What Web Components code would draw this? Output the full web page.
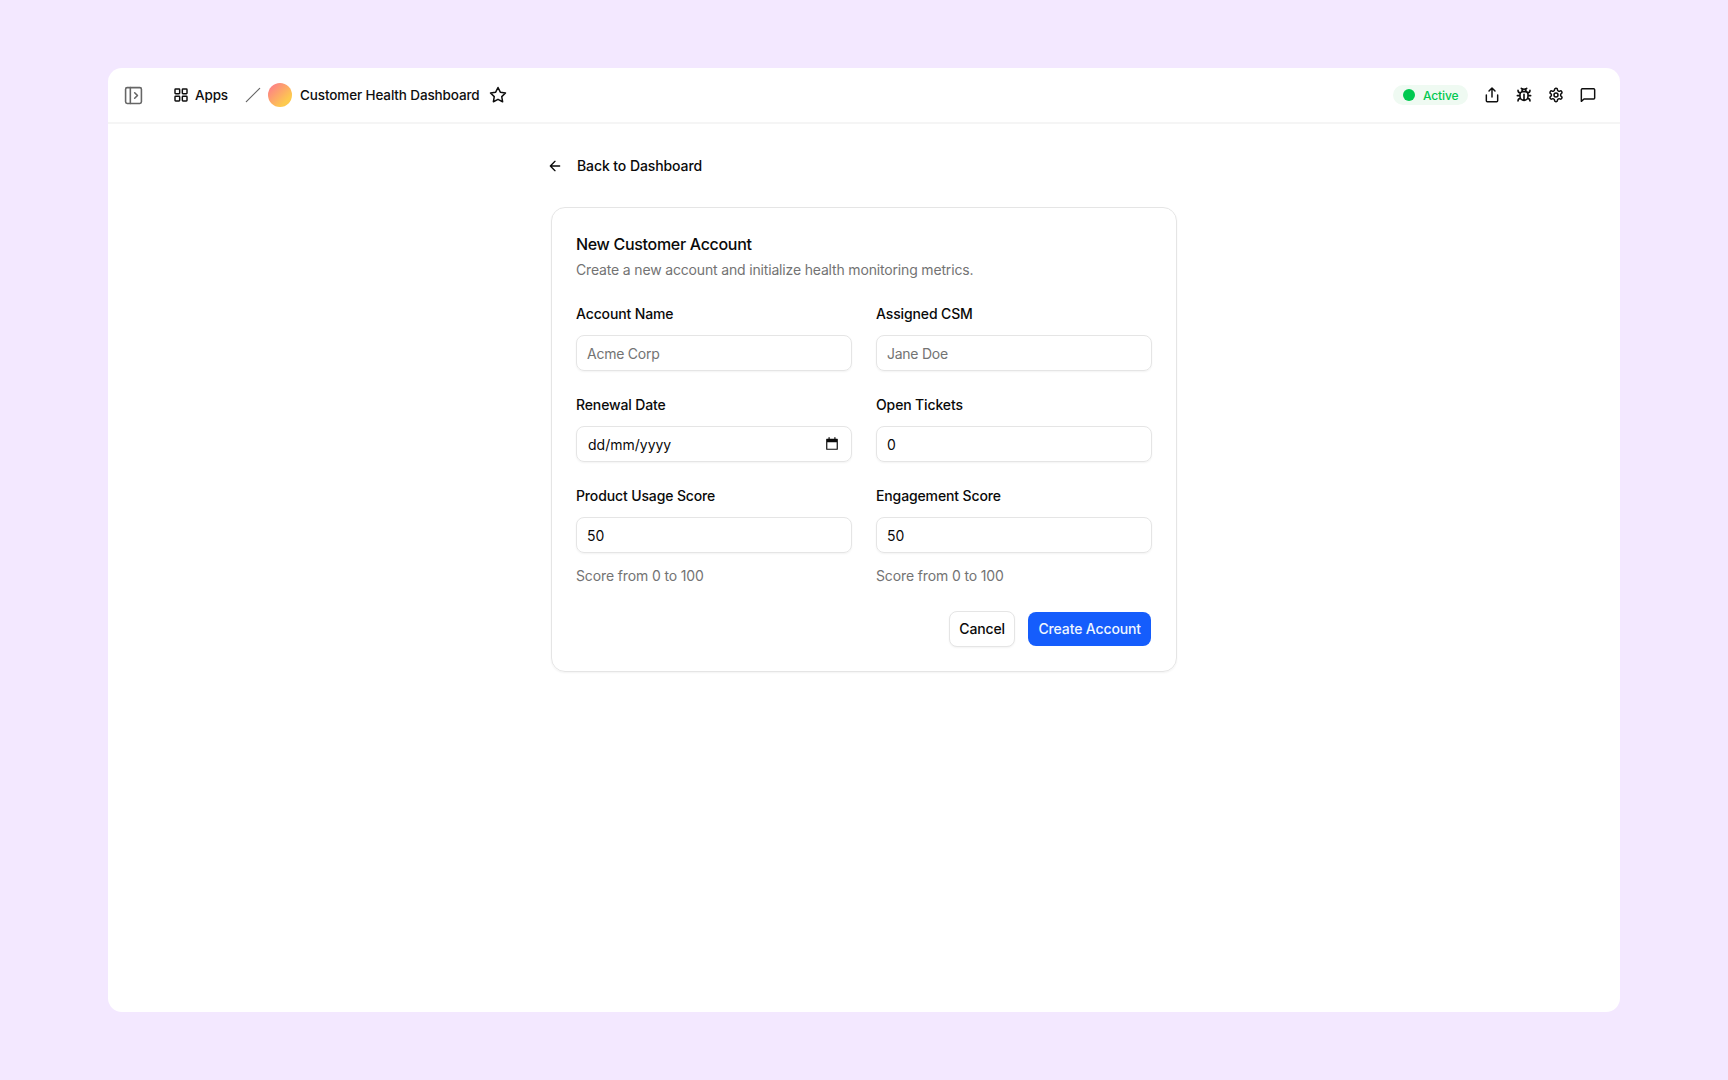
<!DOCTYPE html>
<html lang="en">
<head>
<meta charset="utf-8">
<title>Customer Health Dashboard</title>
<style>
    html, body {
        margin: 0;
        height: 100%;
    }

    body {
        background-color: #f3e8ff;
        font-family: Inter, "Liberation Sans", sans-serif;
        font-size: 14px;
        color: #0a0a0a;
        -webkit-font-smoothing: antialiased;
    }
</style>
</head>
<body>
<app-window>
    <app-header slot="header" app-name="Customer Health Dashboard" status="Active"></app-header>
    <back-link>Back to Dashboard</back-link>
    <form-card>
        <span slot="title">New Customer Account</span>
        <span slot="description">Create a new account and initialize health monitoring metrics.</span>
        <form-field placeholder="Acme Corp">Account Name</form-field>
        <form-field placeholder="Jane Doe">Assigned CSM</form-field>
        <form-field type="date" value="dd/mm/yyyy">Renewal Date</form-field>
        <form-field value="0">Open Tickets</form-field>
        <form-field value="50" hint="Score from 0 to 100">Product Usage Score</form-field>
        <form-field value="50" hint="Score from 0 to 100">Engagement Score</form-field>
        <form-button slot="actions">Cancel</form-button>
        <form-button slot="actions" primary>Create Account</form-button>
    </form-card>
</app-window>

<script>
// all icons live on a 24x24 grid
const icons = {
    sidebar: `<rect x="2" y="2" width="20" height="20" rx="2"/><path d="M8 2v20M13.500 8.500l3.500 3.500-3.500 3.500"/>`,
    grid: `<rect x="3" y="3" width="7" height="7" rx="1"/><rect x="14" y="3" width="7" height="7" rx="1"/><rect x="14" y="14" width="7" height="7" rx="1"/><rect x="3" y="14" width="7" height="7" rx="1"/>`,
    slash: `<path d="M22 2 2 22"/>`,
    star: `<path d="m12 2 3.090 6.260L22 9.270l-5 4.870 1.180 6.880L12 17.770l-6.180 3.250L7 14.140 2 9.270l6.910-1.010z"/>`,
    share: `<path d="M3.500 12v8.500a1.500 1.500 0 0 0 1.500 1.500h14a1.500 1.500 0 0 0 1.500-1.500V12M16.500 6 12 1.500 7.500 6M12 1.500V15"/>`,
    bug: `<path d="m8 2 1.880 1.880M14.120 3.880 16 2M9 7.130v-1a3.003 3.003 0 1 1 6 0v1M12 20c-3.300 0-6-2.700-6-6v-3a4 4 0 0 1 4-4h4a4 4 0 0 1 4 4v3c0 3.300-2.700 6-6 6M12 20v-9M6.530 9C4.600 8.800 3 7.100 3 5M6 13H2M3 21c0-2.100 1.700-3.900 3.800-4M20.970 5c0 2.100-1.600 3.800-3.500 4M22 13h-4M17.200 17c2.100.1 3.800 1.900 3.800 4"/>`,
    settings: `<path d="M12.220 2h-.44a2 2 0 0 0-2 2v.18a2 2 0 0 1-1 1.730l-.43.25a2 2 0 0 1-2 0l-.15-.08a2 2 0 0 0-2.730.73l-.22.38a2 2 0 0 0 .73 2.730l.15.1a2 2 0 0 1 1 1.720v.51a2 2 0 0 1-1 1.740l-.15.09a2 2 0 0 0-.73 2.730l.22.38a2 2 0 0 0 2.730.73l.15-.08a2 2 0 0 1 2 0l.43.25a2 2 0 0 1 1 1.730V20a2 2 0 0 0 2 2h.44a2 2 0 0 0 2-2v-.18a2 2 0 0 1 1-1.730l.43-.25a2 2 0 0 1 2 0l.15.08a2 2 0 0 0 2.730-.73l.22-.39a2 2 0 0 0-.73-2.730l-.15-.08a2 2 0 0 1-1-1.740v-.5a2 2 0 0 1 1-1.740l.15-.09a2 2 0 0 0 .73-2.730l-.22-.38a2 2 0 0 0-2.730-.73l-.15.08a2 2 0 0 1-2 0l-.43-.25a2 2 0 0 1-1-1.730V4a2 2 0 0 0-2-2z"/><circle cx="12" cy="12" r="3"/>`,
    message: `<path d="M22 4v12.500a1.500 1.500 0 0 1-1.500 1.500H6l-4 3.500V4a1.500 1.500 0 0 1 1.500-1.500h17A1.500 1.500 0 0 1 22 4z"/>`,
    back: `<path d="m12 19-7-7 7-7M19 12H5"/>`,
    calendar: `<path d="M3 4h18v17H3zM3 6h18M3 8h18M7 1v4M17 1v4"/>`
}

class UiIcon extends HTMLElement{
    constructor(){
        super()
        this.attachShadow({mode: "open"})
    }

    connectedCallback(){
        const size = this.getAttribute("size") || 16
        const stroke = this.getAttribute("stroke") || 2
        this.shadowRoot.innerHTML = `
        <style>
        :host {
            display: block;
            flex: none;
        }

        svg {
            display: block;
            overflow: visible;
        }
        </style>
        <svg width="${size}" height="${size}" viewBox="0 0 24 24" fill="none" stroke="currentColor" stroke-width="${stroke}" stroke-linecap="round" stroke-linejoin="round">${icons[this.getAttribute("name")]}</svg>`
    }
}

const windowTemplate = document.createElement("template")
windowTemplate.innerHTML = `
        <style>
        :host {
            display: flex;
            box-sizing: border-box;
            height: 100vh;
            padding: 68px 108px;
        }

        .window {
            flex: 1;
            background-color: #fff;
            border-radius: 14px;
            overflow: hidden;
        }

        .content {
            width: 626px;
            margin: 0 auto;
            padding-top: 30px;
        }
        </style>

        <div class="window">
            <slot name="header"></slot>
            <main class="content"><slot></slot></main>
        </div>
`

class AppWindow extends HTMLElement{
    constructor(){
        super()
        this.attachShadow({mode: "open"})
        this.shadowRoot.append(windowTemplate.content.cloneNode(true))
    }
}

const headerTemplate = document.createElement("template")
headerTemplate.innerHTML = `
        <style>
        :host {
            display: block;
        }

        header {
            display: flex;
            align-items: center;
            justify-content: space-between;
            box-sizing: border-box;
            height: 56px;
            padding: 0 24px 0 16px;
            border-bottom: 2px solid #f5f5f5;
            font-size: 13.5px;
            font-weight: 500;
            letter-spacing: -.13px;
            color: #0f0f0f;
        }

        .crumbs, .tools, .status {
            display: flex;
            align-items: center;
        }

        .apps, .name {
            padding-bottom: 1px;
        }

        .muted {
            color: #666;
        }

        .apps {
            margin: 0 17px 0 6px;
        }

        .grid {
            margin-left: 30px;
        }

        .avatar {
            width: 24px;
            height: 24px;
            margin: 0 8px 1px 7px;
            border-radius: 50%;
            background: linear-gradient(135deg, #fd7490, #fdc94f 75%);
        }

        .star {
            margin-left: 9px;
        }

        .tools {
            gap: 16px;
        }

        .status {
            box-sizing: border-box;
            width: 75px;
            height: 20px;
            padding-left: 10px;
            gap: 8px;
            border-radius: 10px;
            background-color: #effaf2;
            color: #00c950;
            font-size: 12px;
        }

        .dot {
            width: 12px;
            height: 12px;
            border-radius: 50%;
            background-color: #00c950;
        }
        </style>

        <header>
            <div class="crumbs">
                <ui-icon class="muted" name="sidebar" size="19" stroke="2"></ui-icon>
                <ui-icon class="grid" name="grid" stroke="2.2"></ui-icon>
                <span class="apps">Apps</span>
                <ui-icon class="muted" name="slash" stroke="1.8"></ui-icon>
                <span class="avatar"></span>
                <span class="name"></span>
                <ui-icon class="star" name="star" size="18"></ui-icon>
            </div>
            <div class="tools">
                <span class="status"><span class="dot"></span><span class="label"></span></span>
                <ui-icon name="share" stroke="2.2"></ui-icon>
                <ui-icon name="bug" stroke="2.4"></ui-icon>
                <ui-icon name="settings" stroke="2.3"></ui-icon>
                <ui-icon name="message" stroke="2.2"></ui-icon>
            </div>
        </header>
`

class AppHeader extends HTMLElement{
    constructor(){
        super()
        this.attachShadow({mode: "open"})
        this.shadowRoot.append(headerTemplate.content.cloneNode(true))
        this.shadowRoot.querySelector(".name").textContent = this.getAttribute("app-name")
        this.shadowRoot.querySelector(".label").textContent = this.getAttribute("status")
    }
}

const backTemplate = document.createElement("template")
backTemplate.innerHTML = `
        <style>
        :host {
            display: flex;
            align-items: center;
            height: 24px;
            margin: 0 0 29px -4px;
            gap: 14px;
            font-weight: 500;
            letter-spacing: -.09px;
        }

        span {
            padding-bottom: 2px;
        }
        </style>

        <ui-icon name="back"></ui-icon>
        <span><slot></slot></span>
`

class BackLink extends HTMLElement{
    constructor(){
        super()
        this.attachShadow({mode: "open"})
        this.shadowRoot.append(backTemplate.content.cloneNode(true))
    }
}

const cardTemplate = document.createElement("template")
cardTemplate.innerHTML = `
        <style>
        :host {
            display: block;
            box-sizing: border-box;
            padding: 24px;
            border: 1px solid #e5e5e5;
            border-radius: 14px;
            box-shadow: 0 1px 2px rgba(0, 0, 0, .05);
            letter-spacing: -.13px;
        }

        h2 {
            margin: 0;
            font-size: 16px;
            line-height: 24px;
            font-weight: 500;
            letter-spacing: -.31px;
        }

        p {
            margin: 2px 0 22px;
            line-height: 24px;
            letter-spacing: -.165px;
            color: #737373;
        }

        .fields {
            display: grid;
            grid-template-columns: 1fr 1fr;
            gap: 24px;
        }

        .actions {
            display: flex;
            justify-content: flex-end;
            gap: 13px;
            margin: 24px 1px 0 0;
        }
        </style>

        <h2><slot name="title"></slot></h2>
        <p><slot name="description"></slot></p>
        <div class="fields"><slot></slot></div>
        <div class="actions"><slot name="actions"></slot></div>
`

class FormCard extends HTMLElement{
    constructor(){
        super()
        this.attachShadow({mode: "open"})
        this.shadowRoot.append(cardTemplate.content.cloneNode(true))
    }
}

const fieldTemplate = document.createElement("template")
fieldTemplate.innerHTML = `
        <style>
        :host {
            display: block;
        }

        .label {
            display: block;
            line-height: 20px;
            margin-bottom: 11px;
            font-weight: 500;
        }

        .box {
            display: flex;
            align-items: center;
            justify-content: space-between;
            box-sizing: border-box;
            height: 36px;
            padding: 0 12px 0 10px;
            border: 1px solid #e5e5e5;
            border-radius: 8px;
            box-shadow: 0 1px 2px rgba(0, 0, 0, .05);
        }

        .box.placeholder {
            letter-spacing: -.25px;
            color: #737373;
        }

        .box.date {
            padding-left: 11px;
            letter-spacing: 0;
        }

        .hint {
            margin-top: 12px;
            line-height: 22px;
            color: #737373;
        }
        </style>

        <label class="label"><slot></slot></label>
        <div class="box"><span class="value"></span></div>
`

class FormField extends HTMLElement{
    constructor(){
        super()
        this.attachShadow({mode: "open"})
        this.shadowRoot.append(fieldTemplate.content.cloneNode(true))
        const box = this.shadowRoot.querySelector(".box")
        const value = this.getAttribute("value")
        box.classList.toggle("placeholder", value === null)
        this.shadowRoot.querySelector(".value").textContent = value || this.getAttribute("placeholder")

        if(this.getAttribute("type") === "date"){
            const icon = document.createElement("ui-icon")
            icon.setAttribute("name", "calendar")
            icon.setAttribute("size", "14")
            box.classList.add("date")
            box.append(icon)
        }

        if(this.hasAttribute("hint")){
            const hint = document.createElement("div")
            hint.className = "hint"
            hint.textContent = this.getAttribute("hint")
            this.shadowRoot.append(hint)
        }
    }
}

const buttonTemplate = document.createElement("template")
buttonTemplate.innerHTML = `
        <style>
        :host {
            display: block;
        }

        button {
            display: block;
            box-sizing: border-box;
            height: 36px;
            padding: 0 9.5px 1px;
            border: 1px solid #e5e5e5;
            border-radius: 8px;
            background-color: #fff;
            box-shadow: 0 1px 2px rgba(0, 0, 0, .05);
            color: inherit;
            font: inherit;
            font-weight: 500;
            letter-spacing: inherit;
        }

        :host([primary]) button {
            height: 34px;
            margin-top: 1px;
            padding: 0 10px 1px;
            border: 0;
            background-color: #155dfc;
            box-shadow: none;
            color: #eff6ff;
        }
        </style>

        <button type="button"><slot></slot></button>
`

class FormButton extends HTMLElement{
    constructor(){
        super()
        this.attachShadow({mode: "open"})
        this.shadowRoot.append(buttonTemplate.content.cloneNode(true))
    }
}

window.customElements.define("ui-icon", UiIcon)
window.customElements.define("app-window", AppWindow)
window.customElements.define("app-header", AppHeader)
window.customElements.define("back-link", BackLink)
window.customElements.define("form-card", FormCard)
window.customElements.define("form-field", FormField)
window.customElements.define("form-button", FormButton)
</script>
</body>
</html>
